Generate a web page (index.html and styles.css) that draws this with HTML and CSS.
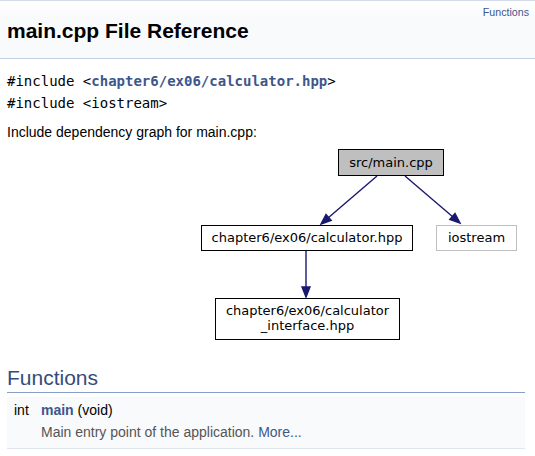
FILE: index.html
```html
<!DOCTYPE html>
<html>
<head>
<meta charset="utf-8">
<title>main.cpp File Reference</title>
<link rel="stylesheet" href="styles.css">
</head>
<body>
<div class="header">
  <div class="headertitle"><div class="title">main.cpp File Reference</div></div>
  <div class="summary"><a href="#func-members">Functions</a></div>
</div>
<div class="contents">
  <div class="includes">
    <code>#include &lt;<a class="code" href="#">chapter6/ex06/calculator.hpp</a>&gt;</code>
    <code>#include &lt;iostream&gt;</code>
  </div>
  <p class="graphcap">Include dependency graph for main.cpp:</p>
  <svg class="depgraph" width="518" height="200" viewBox="0 0 518 200">
    <g class="edges" stroke="#191970" fill="#191970" stroke-width="1.4">
      <line x1="370" y1="31" x2="321" y2="73" />
      <polygon points="314,79 324.2,75.5 319,69.5" />
      <line x1="398" y1="31" x2="446" y2="72" />
      <polygon points="453,78 442.8,74.5 448,68.5" />
      <line x1="299" y1="106" x2="299" y2="143" />
      <polygon points="299,152 295,142 303,142" />
    </g>
    <g class="nodes">
      <rect x="331.5" y="4.5" width="105" height="26" fill="#bfbfbf" stroke="#000" />
      <text x="384" y="22" text-anchor="middle">src/main.cpp</text>
      <rect x="194.5" y="80.5" width="211" height="25" fill="#fff" stroke="#000" />
      <text x="300" y="97" text-anchor="middle">chapter6/ex06/calculator.hpp</text>
      <rect x="429.5" y="80.5" width="80" height="25" fill="#fff" stroke="#bfbfbf" />
      <text x="469.5" y="97" text-anchor="middle">iostream</text>
      <rect x="208.5" y="153.5" width="184" height="41" fill="#fff" stroke="#000" />
      <text x="300.5" y="170" text-anchor="middle">chapter6/ex06/calculator</text>
      <text x="300.5" y="185" text-anchor="middle">_interface.hpp</text>
    </g>
  </svg>
  <h2 class="groupheader" id="func-members">Functions</h2>
  <div class="memberdecls">
    <div class="memitem">
      <span class="memItemLeft">int</span>
      <span class="memItemRight"><a class="el" href="#">main</a> (void)</span>
    </div>
    <div class="memdesc">
      <span class="mdescLeft"></span>
      <span class="mdescRight">Main entry point of the application. <a href="#">More...</a></span>
    </div>
  </div>
</div>
</body>
</html>
```
FILE: styles.css
```css
html, body {
  margin: 0;
  padding: 0;
  background: #ffffff;
}
body {
  font-family: "Liberation Sans", Arial, sans-serif;
  font-size: 14px;
  line-height: 22px;
  color: #000;
}
a {
  color: #3d578c;
  text-decoration: none;
}
.header {
  display: flex;
  justify-content: space-between;
  align-items: flex-start;
  border-top: 1px solid #d3dae8;
  border-bottom: 1px solid #c4cfe5;
  background: linear-gradient(#ffffff, #f9fafc 30%, #f9fafc);
  padding-top: 4px;
}
.title {
  font-size: 21px;
  font-weight: bold;
  line-height: 28px;
  margin: 12px 0 13px 7px;
}
.summary {
  font-size: 10.67px;
  line-height: 14px;
  padding-right: 6px;
}
.summary a {
  color: #3d578c;
}
.contents {
  margin: 0 10px 0 7px;
}
.includes {
  display: flex;
  flex-direction: column;
  margin-top: 11px;
}
.includes code {
  font-family: "DejaVu Sans Mono", monospace;
  font-size: 14px;
  line-height: 22px;
}
.includes a.code {
  font-weight: bold;
  color: #3d578c;
}
.graphcap {
  margin: 7px 0 2px 0;
}
.depgraph {
  display: block;
}
.depgraph text {
  font-family: "DejaVu Sans", sans-serif;
  font-size: 13px;
  fill: #000;
}
.groupheader {
  font-size: 21px;
  font-weight: normal;
  line-height: 24px;
  color: #354c7b;
  margin: 21px 0 0 0;
  padding: 0 0 2px 0;
  border-bottom: 1px solid #879ecb;
}
.memberdecls {
  margin-top: 4px;
  background: #f9fafc;
  border-bottom: 1px solid #dee4f0;
  padding: 3px 0 5px 0;
}
.memitem, .memdesc {
  display: grid;
  grid-template-columns: 34px 1fr;
}
.memitem {
  line-height: 21px;
}
.memItemLeft {
  padding-left: 7px;
}
.memItemRight a.el {
  font-weight: bold;
}
.mdescRight {
  color: #555;
}
.mdescRight a {
  color: #3d578c;
}
```
